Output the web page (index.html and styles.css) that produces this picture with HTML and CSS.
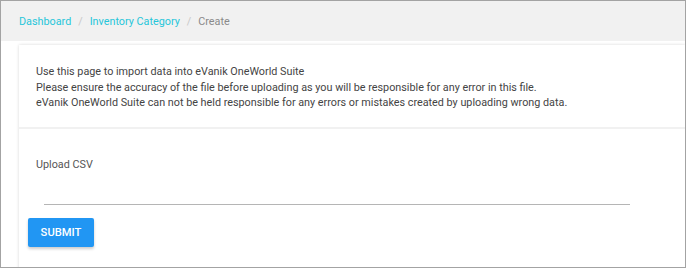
FILE: index.html
```html
<!DOCTYPE html>
<html lang="en">
<head>
    <meta charset="UTF-8">
    <meta name="viewport" content="width=device-width, initial-scale=1.0">
    <title>Inventory Category - Import</title>
    <link rel="stylesheet" href="styles.css">
</head>
<body>
    <div class="frame">
        <nav class="breadcrumb-bar">
            <a href="#" class="crumb">Dashboard</a>
            <span class="sep">/</span>
            <a href="#" class="crumb">Inventory Category</a>
            <span class="sep">/</span>
            <span class="crumb current">Create</span>
        </nav>

        <div class="content">
            <div class="card">
                <div class="card-note">
                    <p>Use this page to import data into eVanik OneWorld Suite</p>
                    <p>Please ensure the accuracy of the file before uploading as you will be responsible for any error in this file.</p>
                    <p>eVanik OneWorld Suite can not be held responsible for any errors or mistakes created by uploading wrong data.</p>
                </div>

                <form class="card-form" onsubmit="return false;">
                    <label class="field-label" for="csvFile">Upload CSV</label>
                    <div class="file-field" id="csvFile"></div>
                    <button type="submit" class="button">SUBMIT</button>
                </form>
            </div>
        </div>
    </div>
</body>
</html>
```

FILE: styles.css
```css
html, body {
    margin: 0;
    height: 100%;
}
body {
    font-family: Roboto, 'Liberation Sans', sans-serif;
    color: #555;
    background-color: #fff;
}
.frame {
    height: 100%;
    box-sizing: border-box;
    border: 1px solid #a3a3a3;
    overflow: hidden;
    background-color: #fff;
}
.breadcrumb-bar {
    height: 40px;
    background-color: #f1f1f1;
    display: flex;
    align-items: center;
    padding-left: 18px;
    font-size: 10.8px;
}
.crumb {
    color: #26c6da;
    text-decoration: none;
}
.crumb.current {
    color: #8a8a8a;
}
.sep {
    color: #c8c8c8;
    margin: 0 7px;
}
.content {
    padding: 4px 0 0 18px;
}
.card {
    background-color: #fff;
    box-shadow: 0 0 3px rgba(0, 0, 0, 0.16);
    min-height: 240px;
}
.card-note {
    padding: 19px 17px 16px;
    border-bottom: 2px solid #f1f1f1;
    font-size: 10.8px;
    line-height: 15.5px;
    color: #444;
}
.card-note p {
    margin: 0;
}
.card-form {
    padding: 28px 0 0 17px;
}
.field-label {
    display: block;
    font-size: 10.8px;
    line-height: 15.5px;
    color: #555;
}
.file-field {
    width: 586px;
    margin: 32px 0 0 8px;
    border-bottom: 1px solid #b5b5b5;
}
.button {
    margin: 13px 0 0 -8px;
    width: 66px;
    height: 29px;
    background-color: #2196f3;
    color: #fff;
    border: none;
    border-radius: 2px;
    font-family: Roboto, 'Liberation Sans', sans-serif;
    font-weight: 500;
    font-size: 11.2px;
    box-shadow: 0 2px 3px rgba(0, 0, 0, 0.2);
    cursor: pointer;
}
```
